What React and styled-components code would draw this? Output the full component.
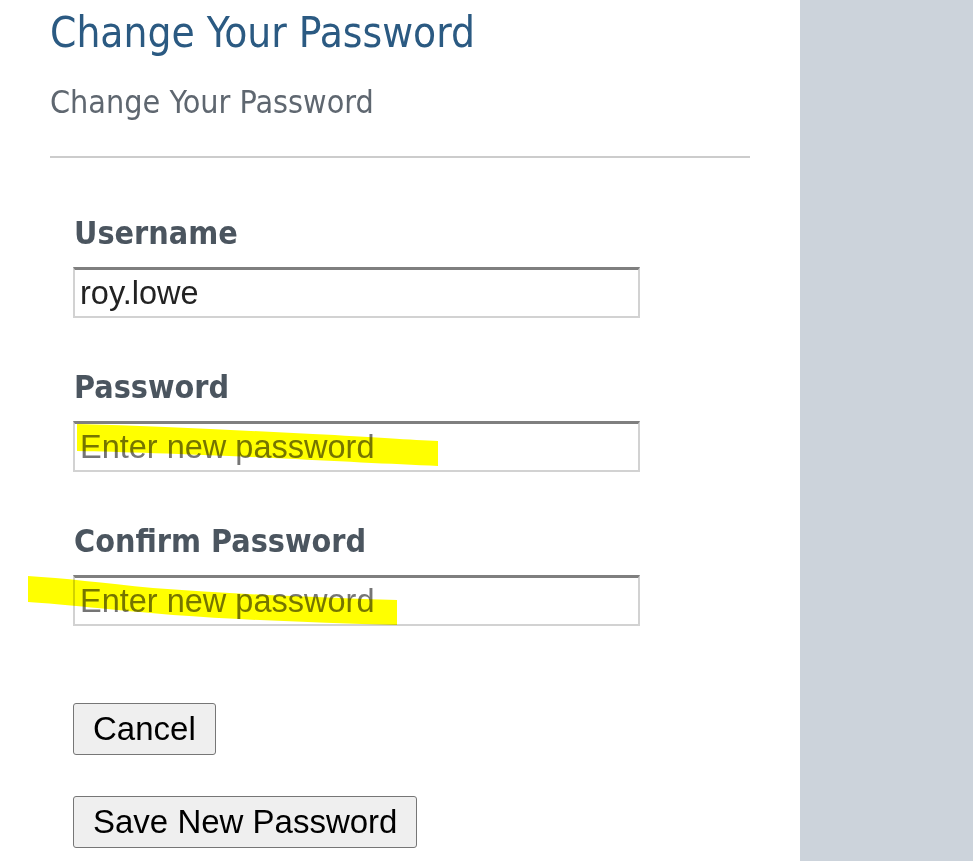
import React from "react";
import styled, { createGlobalStyle } from "styled-components";

const Global = createGlobalStyle`
  html, body { margin: 0; padding: 0; background: #fff; }
  body { font-family: "DejaVu Sans Condensed", "DejaVu Sans", sans-serif; }
`;

const Page = styled.div`
  display: flex;
  min-height: 861px;
`;

const Main = styled.main`
  width: 800px;
  flex: none;
  padding: 0 50px;
  box-sizing: border-box;
`;

const Side = styled.aside`
  flex: 1;
  background: #ccd3db;
`;

const Title = styled.h1`
  margin: 8px 0 0;
  font-family: "DejaVu Sans Condensed", "DejaVu Sans", sans-serif;
  font-weight: normal;
  font-size: 42px;
  line-height: 50px;
  color: #2b5a82;
`;

const Subtitle = styled.h2`
  margin: 24px 0 0;
  font-family: "DejaVu Sans Condensed", "DejaVu Sans", sans-serif;
  font-weight: normal;
  font-size: 32px;
  line-height: 40px;
  color: #5f6770;
`;

const Rule = styled.hr`
  margin: 34px 0 0;
  border: none;
  border-top: 2px solid #cccccc;
`;

const Form = styled.form`
  padding: 57px 0 0 23px;
  display: flex;
  flex-direction: column;
`;

const Field = styled.div`
  display: flex;
  flex-direction: column;
  margin-bottom: ${(p) => p.$gap ?? 51}px;
`;

const Label = styled.label`
  font-family: "DejaVu Sans Condensed", "DejaVu Sans", sans-serif;
  font-weight: bold;
  font-size: 32px;
  line-height: 36px;
  color: #4b555f;
  margin-bottom: 16px;
  padding-left: 1px;
`;

const InputWrap = styled.div`
  position: relative;
  width: 567px;
`;

const Input = styled.input`
  display: block;
  width: 567px;
  height: 51px;
  box-sizing: border-box;
  border: 2px solid #d2d2d2;
  border-top: 3px solid #7f7f7f;
  padding: 0 5px;
  font-family: "Liberation Sans", Arial, sans-serif;
  font-size: 32.5px;
  color: #222;
  background: #fff;
  outline: none;
  &::placeholder {
    color: #757575;
  }
`;

const Highlight = styled.svg`
  position: absolute;
  left: 0;
  top: 0;
  pointer-events: none;
  mix-blend-mode: multiply;
  overflow: visible;
`;

const Buttons = styled.div`
  display: flex;
  flex-direction: column;
  align-items: flex-start;
  gap: 41px;
  margin-top: 77px;
`;

const Button = styled.button`
  font-family: "Liberation Sans", Arial, sans-serif;
  font-size: 33px;
  height: 52px;
  padding: 0 19px;
  background: #efefef;
  color: #000;
  border: 1px solid #767676;
  border-radius: 3px;
  cursor: pointer;
`;

export default function App() {
  return (
    <>
      <Global />
      <Page>
        <Main>
          <Title>Change Your Password</Title>
          <Subtitle>Change Your Password</Subtitle>
          <Rule />
          <Form onSubmit={(e) => e.preventDefault()}>
            <Field>
              <Label htmlFor="u">Username</Label>
              <InputWrap>
                <Input id="u" defaultValue="roy.lowe" />
              </InputWrap>
            </Field>
            <Field>
              <Label htmlFor="p">Password</Label>
              <InputWrap>
                <Input id="p" type="password" placeholder="Enter new password" />
                <Highlight width="1" height="1">
                  <path
                    d="M4 3 C80 5 160 9 240 13 C300 16 340 19 365 20 L365 45 C320 43 260 40 200 37 C120 33 50 31 4 30 Z"
                    fill="#ffff00"
                  />
                </Highlight>
              </InputWrap>
            </Field>
            <Field $gap={0}>
              <Label htmlFor="c">Confirm Password</Label>
              <InputWrap>
                <Input id="c" type="password" placeholder="Enter new password" />
                <Highlight width="1" height="1">
                  <path
                    d="M-45 1 C-10 3 30 8 80 13 C160 19 250 23 324 25 L324 50 C250 48 170 45 100 40 C40 35 -10 29 -45 27 Z"
                    fill="#ffff00"
                  />
                </Highlight>
              </InputWrap>
            </Field>
            <Buttons>
              <Button type="button">Cancel</Button>
              <Button type="submit">Save New Password</Button>
            </Buttons>
          </Form>
        </Main>
        <Side />
      </Page>
    </>
  );
}
